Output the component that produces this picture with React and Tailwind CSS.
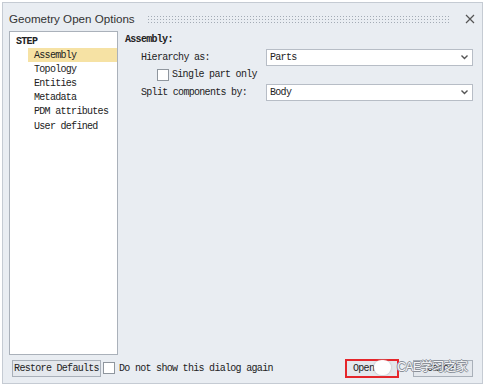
import React from 'react'

const mono = { fontFamily: '"Liberation Mono", "DejaVu Sans Mono", monospace' }

const Select = ({ value }) => (
    <div className="flex-1 h-[17px] bg-white border border-[#b7bdc6] flex items-center justify-between pl-[3px] pr-[4px]">
        <span className="text-[10px] tracking-[-0.7px] text-[#222]" style={mono}>{value}</span>
        <svg width="7" height="5" viewBox="0 0 7 5"><path d="M0.5 0.5 L3.5 3.5 L6.5 0.5" fill="none" stroke="#555" strokeWidth="1.4" /></svg>
    </div>
)

const Check = () => <div className="w-[12px] h-[12px] bg-white border border-[#8f969e] shrink-0" />

const App = () => {
    const items = ['Assembly', 'Topology', 'Entities', 'Metadata', 'PDM attributes', 'User defined']

    return (
        <div className="w-[485px] h-[388px] bg-white pt-[2px] pl-[2px]">
            <div className="w-[481px] h-[382px] bg-[#e9edf2] border border-[#c5cbd3] flex flex-col">
                {/* title bar */}
                <div className="h-[28px] flex items-center pl-[6px] pr-[7px] pt-[4px]">
                    <span className="text-[11.6px] text-[#333]" style={{ fontFamily: '"Liberation Sans", Arial, sans-serif' }}>Geometry Open Options</span>
                    <div className="flex-1 ml-[12px] mr-[14px] h-[9px] bg-[radial-gradient(circle,#a3abb5_0.7px,transparent_1px)] bg-[length:3px_3px]" />
                    <svg width="10" height="10" viewBox="0 0 10 10"><path d="M1 1 L9 9 M9 1 L1 9" stroke="#555" strokeWidth="1.2" /></svg>
                </div>

                <div className="flex flex-1 pl-[6px] pr-[9px]">
                    {/* tree */}
                    <div className="w-[109px] h-[324px] bg-white border border-[#aab1ba] pt-[2px] pl-[1px] text-[10px] tracking-[-0.7px] text-[#222]" style={mono}>
                        <div className="h-[14px] pl-[5px] font-bold flex items-center">STEP</div>
                        {items.map((item, index) => (
                            <div key={index} className={`h-[14.2px] ml-[17px] pl-[6px] flex items-center ${index === 0 ? 'bg-[#f6e2a4]' : ''}`}>{item}</div>
                        ))}
                    </div>

                    {/* options */}
                    <div className="flex-1 pl-[7px] pt-[2px] text-[10px] tracking-[-0.7px] text-[#222]" style={mono}>
                        <div className="font-bold h-[12px] flex items-center">Assembly:</div>
                        <div className="flex items-center mt-[4px] pl-[16px]">
                            <span className="w-[125px]">Hierarchy as:</span>
                            <Select value="Parts" />
                        </div>
                        <div className="flex items-center gap-[3px] mt-[1px] pl-[32px] h-[15px]">
                            <Check />
                            <span>Single part only</span>
                        </div>
                        <div className="flex items-center mt-[2px] pl-[16px]">
                            <span className="w-[125px]">Split components by:</span>
                            <Select value="Body" />
                        </div>
                    </div>
                </div>

                {/* footer */}
                <div className="relative h-[26px] flex items-center pl-[9px] pr-[9px] pb-[4px] text-[10px] tracking-[-0.7px] text-[#222]" style={mono}>
                    <div className="h-[17px] w-[89px] border border-[#a9b0b9] bg-[#e4e8ed] flex items-center justify-center">Restore Defaults</div>
                    <div className="ml-[2px]"><Check /></div>
                    <span className="ml-[4px]">Do not show this dialog again</span>
                    <div className="flex-1" />
                    <div className="h-[19px] w-[54px] border-2 border-[#e5262b] bg-[#e4e8ed] flex items-center pl-[6px]">Open</div>
                    <div className="w-[14px]" />
                    <div className="h-[17px] w-[60px] border border-[#a9b0b9] bg-[#e4e8ed] flex items-center justify-center">Cancel</div>

                    {/* watermark */}
                    <div className="absolute left-[371px] top-[1px] flex items-center gap-[6px] pointer-events-none">
                        <div className="w-[17px] h-[15px] rounded-full bg-white/95 shadow-[0_0_2px_#aaa]" />
                        <span className="text-[12.5px] tracking-[-0.8px] text-[#f4f5f7] [text-shadow:1px_0_0_#8a9099,-1px_0_0_#8a9099,0_1px_0_#8a9099,0_-1px_0_#8a9099]" style={{ fontFamily: '"Liberation Sans", "Noto Sans CJK SC", sans-serif' }}>CAE学习之家</span>
                    </div>
                </div>
            </div>
        </div>
    )
}

export default App
